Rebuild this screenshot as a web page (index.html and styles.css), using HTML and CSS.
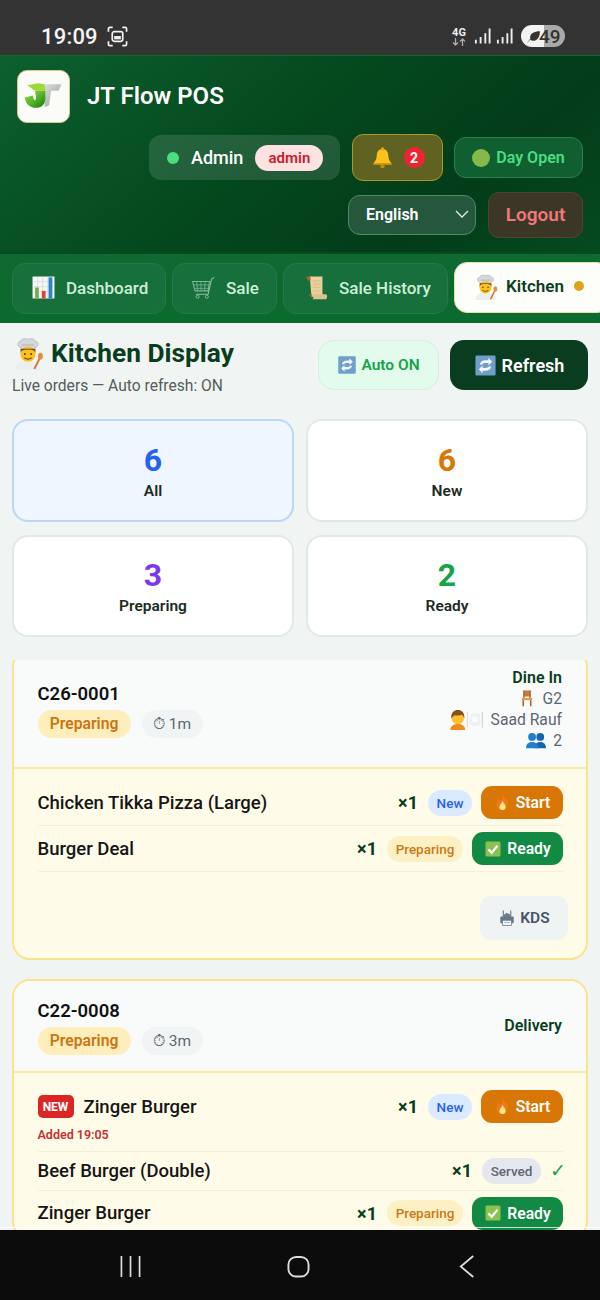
FILE: index.html
```html
<!DOCTYPE html>
<html lang="en">
<head>
<meta charset="utf-8">
<title>JT Flow POS — Kitchen Display</title>
<link rel="stylesheet" href="styles.css">
</head>
<body>
<svg class="defs" aria-hidden="true">
  <defs>
    <linearGradient id="g-logo-j" x1="0" y1="0" x2="1" y2="1"><stop offset="0" stop-color="#a8e03f"/><stop offset=".55" stop-color="#4fb026"/><stop offset="1" stop-color="#1a7516"/></linearGradient>
    <linearGradient id="g-logo-t" x1="0" y1="0" x2="1" y2="1"><stop offset="0" stop-color="#dfe2df"/><stop offset=".6" stop-color="#b4bab6"/><stop offset="1" stop-color="#7f8784"/></linearGradient>
    <symbol id="i-cook" viewBox="0 0 32 32">
      <path d="M9 10.500C5.500 10 6 5 9 5c1-2.500 4-3 7-2 3-1 6-.5 7 2 3 0 3.500 5 0 5.500l-.5 2.500h-13z" fill="#d5d8da" stroke="#a9aeb2" stroke-width=".6"/>
      <path d="M10 8.500h12" stroke="#a9aeb2" stroke-width=".7"/>
      <path d="M4 32c0-6 4-8.500 12-8.500s12 2.500 12 8.500z" fill="#eceef0"/>
      <circle cx="16" cy="17" r="7.200" fill="#fcc21b"/>
      <path d="M8.800 16c1-2.500 3-3 7.200-3s6.200.5 7.200 3l-.4-4H9.200z" fill="#7a4a2a"/>
      <path d="M12.500 20.500q3.500 2.500 7 0" fill="none" stroke="#7a4a2a" stroke-width="1.200"/>
      <circle cx="13" cy="17" r=".9" fill="#40342b"/><circle cx="19" cy="17" r=".9" fill="#40342b"/>
      <path d="M22 31l5-10" stroke="#c9762f" stroke-width="1.800"/>
      <ellipse cx="27.700" cy="19" rx="2.300" ry="3.200" fill="#e08f3e"/>
    </symbol>
    <symbol id="i-chart" viewBox="0 0 32 32">
      <rect x="3" y="3" width="26" height="26" fill="#f4f7f5"/>
      <path d="M3 9h26M3 15h26M3 21h26M9 3v26M15 3v26M21 3v26" stroke="#c8d6d4" stroke-width=".7"/>
      <rect x="6" y="16" width="4.500" height="13" fill="#7cab4f"/>
      <rect x="14" y="20" width="4.500" height="9" fill="#d8453a"/>
      <rect x="22" y="4" width="4.500" height="25" fill="#2a85cc"/>
    </symbol>
    <symbol id="i-cart" viewBox="0 0 32 32">
      <path d="M3 9h20l-1.500 11H6z" fill="none" stroke="#7fb598" stroke-width="1.200"/>
      <path d="M8 9l1 11M13 9v11M18 9l-1 11M4 13h18.500M5 17h17" stroke="#7fb598" stroke-width=".9"/>
      <path d="M29 4l-3.500 2-4 18H7" fill="none" stroke="#8fc0a6" stroke-width="1.300"/>
      <circle cx="9" cy="27" r="1.800" fill="none" stroke="#8fc0a6" stroke-width="1"/>
      <circle cx="20" cy="27" r="1.800" fill="none" stroke="#8fc0a6" stroke-width="1"/>
    </symbol>
    <symbol id="i-scroll" viewBox="0 0 32 32">
      <path d="M8 3h15v24H10z" fill="#e8cf9c"/>
      <path d="M4 3.500c2-1.500 5-1 5 2.500v2H6z" fill="#a8692f"/>
      <path d="M9 24h18c1 0 1.500 1 1.500 2.500S28 30 27 30H11c2-1 2-5-2-6z" fill="#dcc38d"/>
      <path d="M12 8h8M12 12h8M12 16h8M12 20h8" stroke="#d8bd87" stroke-width="1"/>
      <circle cx="9" cy="25" r="1.500" fill="#a3601f"/>
    </symbol>
    <symbol id="i-bell" viewBox="0 0 24 24">
      <path d="M12 3c-4 0-6 3-6 7 0 4-1.500 6-3.500 8h19c-2-2-3.500-4-3.500-8 0-4-2-7-6-7z" fill="#fcc21b"/>
      <circle cx="12" cy="3" r="1.700" fill="#e8a80f"/>
      <path d="M2.500 18h19v1.500h-19z" fill="#e8a20c"/>
      <circle cx="12" cy="21" r="2.200" fill="#c98a0a"/>
    </symbol>
    <symbol id="i-refresh" viewBox="0 0 24 24">
      <rect x="1.500" y="1.500" width="21" height="21" rx="1.500" fill="#6f9fc9"/>
      <path d="M6 11c.5-3 3-4.500 6-4.500h3V4l4 4-4 4V9.500h-3c-1.500 0-3 .5-3.500 1.500zM18 13c-.5 3-3 4.500-6 4.500H9V20l-4-4 4-4v2.500h3c1.500 0 3-.5 3.500-1.500z" fill="#f4f7fa"/>
    </symbol>
    <symbol id="i-fire" viewBox="0 0 24 24">
      <path d="M12 1c1 4 6 7 6 13a6.500 6.500 0 0 1-13 0c0-3 1.500-4.500 2.500-6.500C9 9 9.500 10 10 11c1-3 2.500-6 2-10z" fill="#f4761e"/>
      <path d="M12 10c.8 2.500 3.500 4 3.500 7a3.500 3.500 0 0 1-7 0c0-2.500 3-4 3.500-7z" fill="#fde68a"/>
    </symbol>
    <symbol id="i-check" viewBox="0 0 24 24">
      <rect x="2" y="2" width="20" height="20" rx="2" fill="#8cc152"/>
      <path d="M6 12.500l4.300 4.500L18 7.500" fill="none" stroke="#fff" stroke-width="3"/>
    </symbol>
    <symbol id="i-printer" viewBox="0 0 24 24">
      <path d="M7 2v8M17 2v8" stroke="#5f6f7b" stroke-width="1.400"/>
      <path d="M7 8l5-3 5 3v3H7z" fill="#6d7f8c"/>
      <rect x="3" y="10" width="18" height="9" rx="1.500" fill="#64798a"/>
      <rect x="6" y="15" width="12" height="7" fill="#f3f5f6" stroke="#64798a"/>
      <path d="M8 18h8" stroke="#9aa7b0"/>
    </symbol>
    <symbol id="i-chair" viewBox="0 0 24 24">
      <path d="M7 2h10v3H7zM8 5h8v2H8zM7 7h10v3H7z" fill="#c87a3c"/>
      <path d="M7 2h2v11H7zM15 2h2v11h-2z" fill="#b96a30"/>
      <rect x="5" y="12" width="14" height="3" fill="#e09a5c"/>
      <path d="M6 15h2v8H6zM16 15h2v8h-2z" fill="#a85c28"/>
    </symbol>
    <symbol id="i-waiter" viewBox="0 0 42 24">
      <path d="M2 24c0-5 4-7 8.500-7s8.500 2 8.500 7z" fill="#f08c1d"/>
      <circle cx="10.500" cy="10.500" r="7" fill="#fbc02d"/>
      <path d="M3 11c-.5-7 3-10 7.500-10s8 3 7.500 10c-1-3-2-4-3-4.500-2 1-6 1-8 .5-1.500 1-3 2-4 4z" fill="#8a4f1f"/>
      <path d="M21.500 3v18" stroke="#d9dcde" stroke-width="1.300"/>
      <rect x="24" y="5" width="12" height="14" rx="3" fill="#eef0f1"/>
      <circle cx="30" cy="12" r="3.500" fill="#fbfcfc"/>
      <path d="M38.500 3v18" stroke="#ced2d5" stroke-width="1.300"/>
    </symbol>
    <symbol id="i-people" viewBox="0 0 30 24">
      <circle cx="21" cy="7" r="5.500" fill="#1565b0"/>
      <path d="M13 23c0-6 3-9 8-9s8 3 8 9z" fill="#1565b0"/>
      <circle cx="9.500" cy="7" r="5.500" fill="#1f7fd0"/>
      <path d="M1 23c0-6 3-9 8.500-9s8.500 3 8.500 9z" fill="#1f7fd0"/>
    </symbol>
  </defs>
</svg>

<div class="phone">
  <div class="statusbar">
    <div class="status-left">
      <span class="clock">19:09</span>
      <svg class="shot" viewBox="0 0 22 22">
        <path d="M1.500 6V3q0-1.500 1.500-1.500h3M16 1.500h3q1.500 0 1.500 1.500v3M1.500 16v3q0 1.500 1.500 1.500h3M16 20.500h3q1.500 0 1.500-1.500v-3" fill="none" stroke="#f1f1f1" stroke-width="1.800"/>
        <rect x="5.500" y="6" width="11" height="10" rx="2" fill="none" stroke="#f1f1f1" stroke-width="1.800"/>
        <rect x="7.500" y="10.500" width="7" height="3.500" fill="#f1f1f1"/>
      </svg>
    </div>
    <div class="status-right">
      <span class="net"><b>4G</b>
        <svg class="net-arrows" viewBox="0 0 14 8"><path d="M3.500 0v7M1 4.500L3.500 7 6 4.500M10.500 8V1M8 3.500L10.500 1 13 3.500" fill="none" stroke="#aaa" stroke-width="1.300"/></svg>
      </span>
      <svg class="signal" viewBox="0 0 18 18"><path d="M1 13h2v4H1zM6 10h2v7H6zM11 6h2v11h-2zM15.500 1h2v16h-2z" fill="#eee"/></svg>
      <svg class="signal" viewBox="0 0 18 18"><path d="M1 13h2v4H1zM6 10h2v7H6zM11 6h2v11h-2zM15.500 1h2v16h-2z" fill="#eee"/></svg>
      <span class="battery">
        <svg class="leaf" viewBox="0 0 14 14"><path d="M1 13L4 9C3 4 8 2 13 2c0 5-2 9-7 9L4 10z" fill="#333"/></svg>
        <span class="batt-num">49</span>
      </span>
    </div>
  </div>

  <header class="topbar">
    <div class="brand">
      <div class="logo">
        <svg viewBox="0 0 54 54" class="logo-art">
          <path d="M27 14h19l-3 7h-8l-2 15q-3 2.500-5 1.500l1-16.500h-4z" fill="url(#g-logo-t)"/>
          <path d="M18 21h11v8c0 6-4 10-10 10-6 0-11-4-12-11l9-2c0 3 1 5 2 5s1-2 1-4z" fill="url(#g-logo-j)"/>
          <path d="M10 15l12-2 6 1 1 7H18z" fill="#9bd83a"/>
        </svg>
      </div>
      <h1 class="app-name">JT Flow POS</h1>
    </div>
    <div class="tools">
      <div class="user-pill"><span class="dot"></span><span class="user-name">Admin</span><span class="role">admin</span></div>
      <button class="bell-btn"><svg class="ic ic-22"><use href="#i-bell"/></svg><span class="count">2</span></button>
      <button class="day-btn"><span class="day-dot"></span>Day Open</button>
    </div>
    <div class="tools tools-2">
      <div class="lang">English
        <svg class="chev" viewBox="0 0 14 8"><path d="M1 1l6 6 6-6" fill="none" stroke="#e6efe9" stroke-width="1.300"/></svg>
      </div>
      <button class="logout">Logout</button>
    </div>
  </header>

  <nav class="tabs">
    <a class="tab tab-dash"><svg class="ic ic-26"><use href="#i-chart"/></svg>Dashboard</a>
    <a class="tab tab-sale"><svg class="ic ic-26"><use href="#i-cart"/></svg>Sale</a>
    <a class="tab tab-hist"><svg class="ic ic-26"><use href="#i-scroll"/></svg>Sale History</a>
    <a class="tab tab-active"><svg class="ic ic-26"><use href="#i-cook"/></svg>Kitchen<span class="tab-dot"></span></a>
  </nav>

  <main class="content">
    <section class="page-head">
      <div class="page-title">
        <h2><svg class="ic ic-34"><use href="#i-cook"/></svg>Kitchen Display</h2>
        <p>Live orders — Auto refresh: ON</p>
      </div>
      <div class="page-actions">
        <button class="auto-btn"><svg class="ic ic-19"><use href="#i-refresh"/></svg>Auto ON</button>
        <button class="refresh-btn"><svg class="ic ic-23"><use href="#i-refresh"/></svg>Refresh</button>
      </div>
    </section>

    <section class="stats">
      <div class="stat stat-on"><strong class="c-blue">6</strong><span>All</span></div>
      <div class="stat"><strong class="c-amber">6</strong><span>New</span></div>
      <div class="stat"><strong class="c-purple">3</strong><span>Preparing</span></div>
      <div class="stat"><strong class="c-green">2</strong><span>Ready</span></div>
    </section>

    <section class="orders">
      <div class="orders-inner">
        <article class="order">
          <div class="order-head">
            <div class="order-id">
              <div class="num">C26-0001</div>
              <div class="badges"><span class="badge-prep">Preparing</span><span class="timer">⏱ 1m</span></div>
            </div>
            <div class="order-meta">
              <div class="type">Dine In</div>
              <div class="meta"><svg class="ic ic-17"><use href="#i-chair"/></svg>G2</div>
              <div class="meta"><svg class="ic-waiter"><use href="#i-waiter"/></svg>Saad Rauf</div>
              <div class="meta"><svg class="ic-people"><use href="#i-people"/></svg>2</div>
            </div>
          </div>
          <div class="order-items">
            <div class="item">
              <span class="item-name">Chicken Tikka Pizza (Large)</span>
              <span class="qty">×1</span><span class="st st-new">New</span>
              <button class="act act-start"><svg class="ic ic-fire"><use href="#i-fire"/></svg>Start</button>
            </div>
            <div class="item">
              <span class="item-name">Burger Deal</span>
              <span class="qty">×1</span><span class="st st-prep">Preparing</span>
              <button class="act act-ready"><svg class="ic ic-17"><use href="#i-check"/></svg>Ready</button>
            </div>
            <div class="order-foot">
              <button class="kds"><svg class="ic ic-17"><use href="#i-printer"/></svg>KDS</button>
            </div>
          </div>
        </article>

        <article class="order">
          <div class="order-head">
            <div class="order-id">
              <div class="num">C22-0008</div>
              <div class="badges"><span class="badge-prep">Preparing</span><span class="timer">⏱ 3m</span></div>
            </div>
            <div class="order-meta">
              <div class="type">Delivery</div>
            </div>
          </div>
          <div class="order-items">
            <div class="item item-added">
              <div class="item-line">
                <span class="item-name"><span class="new-tag">NEW</span>Zinger Burger</span>
                <span class="qty">×1</span><span class="st st-new">New</span>
                <button class="act act-start"><svg class="ic ic-fire"><use href="#i-fire"/></svg>Start</button>
              </div>
              <div class="added">Added 19:05</div>
            </div>
            <div class="item">
              <span class="item-name">Beef Burger (Double)</span>
              <span class="qty">×1</span><span class="st st-served">Served</span>
              <span class="tick">✓</span>
            </div>
            <div class="item">
              <span class="item-name">Zinger Burger</span>
              <span class="qty">×1</span><span class="st st-prep">Preparing</span>
              <button class="act act-ready"><svg class="ic ic-17"><use href="#i-check"/></svg>Ready</button>
            </div>
          </div>
        </article>
      </div>
    </section>
  </main>

  <div class="navbar">
    <svg class="nav-ic" viewBox="0 0 22 24"><path d="M1.500 1v22M11 1v22M20.500 1v22" stroke="#dcdcdc" stroke-width="1.800" fill="none"/></svg>
    <svg class="nav-ic" viewBox="0 0 24 24"><rect x="1.500" y="2" width="21" height="20.500" rx="8" fill="none" stroke="#dcdcdc" stroke-width="2"/></svg>
    <svg class="nav-ic" viewBox="0 0 16 24"><path d="M14.500 1L1.500 12l13 11" fill="none" stroke="#dcdcdc" stroke-width="1.900"/></svg>
  </div>
</div>
</body>
</html>
```
FILE: styles.css
```css
* { box-sizing: border-box; }
html, body { margin: 0; padding: 0; }
body { font-family: Roboto, "Liberation Sans", sans-serif; background: #0c0c0c; }
button { font-family: inherit; border: 0; cursor: pointer; padding: 0; }
h1, h2, p { margin: 0; }
.defs { width: 0; height: 0; display: block; overflow: hidden; }

.phone { width: 600px; height: 1300px; display: flex; flex-direction: column; overflow: hidden; }
.ic { display: block; flex: none; }
.ic-fire { width: 21px; height: 21px; margin: 0 -2px; }
.ic-17 { width: 18px; height: 18px; }
.ic-19 { width: 20px; height: 20px; }
.ic-22 { width: 23px; height: 23px; }
.ic-23 { width: 23px; height: 23px; }
.ic-26 { width: 27px; height: 27px; }
.ic-34 { width: 34px; height: 34px; margin-left: -1px; }

/* status bar */
.statusbar { flex: none; height: 55px; background: #333333; display: flex; justify-content: space-between; align-items: center; padding: 17px 35px 0 41px; }
.status-left { display: flex; align-items: center; gap: 9px; }
.clock { font-size: 22px; font-weight: 500; color: #f5f5f5; letter-spacing: .2px; }
.shot { width: 21px; height: 21px; }
.status-right { display: flex; align-items: center; gap: 5px; }
.net { display: flex; flex-direction: column; align-items: center; color: #eee; margin-right: 3px; }
.net b { font-size: 11px; font-weight: 700; line-height: 11px; }
.net-arrows { width: 14px; height: 8px; }
.signal { width: 17px; height: 18px; }
.battery { width: 44px; height: 22px; border-radius: 11px; margin-left: 3px; background: linear-gradient(90deg, #f3f3f3 0 52%, #a9a9a9 52% 100%); display: flex; align-items: center; padding-left: 5px; }
.leaf { width: 15px; height: 15px; }
.batt-num { font-size: 19px; font-weight: 500; color: #333; margin-left: -2px; }

/* header */
.topbar { flex: none; height: 197px; padding: 15px 17px 0 17px; background: linear-gradient(140deg, #0c6030 0%, #04481e 45%, #033c19 75%, #054a20 100%); border-top: 1px solid #0a6a33; }
.brand { display: flex; align-items: center; gap: 17px; height: 53px; margin-top: -1px; padding-bottom: 1px; }
.logo { width: 53px; height: 53px; border-radius: 10px; background: #fbfcf7; border: 1.500px solid #d8c98a; flex: none; overflow: hidden; }
.logo-art { width: 100%; height: 100%; display: block; }
.app-name { font-size: 24px; font-weight: 600; color: #fff; }
.tools { display: flex; justify-content: flex-end; align-items: center; gap: 12px; margin-top: 11px; }
.tools-2 { margin-top: 11px; }
.user-pill { width: 191px; height: 45px; border-radius: 12px; background: rgba(255,255,255,.12); display: flex; align-items: center; padding-left: 18px; }
.dot { width: 12px; height: 12px; border-radius: 50%; background: #4ade80; }
.user-name { font-size: 18px; font-weight: 500; color: #fff; margin-left: 12px; }
.role { margin-left: 12px; width: 68px; height: 26px; border-radius: 13px; background: #fde2e2; color: #c81e2b; font-size: 15px; font-weight: 600; display: flex; align-items: center; justify-content: center; }
.bell-btn { width: 91px; height: 47px; margin-right: -1px; border-radius: 11px; background: #5f6220; border: 1.500px solid #a79a2c; display: flex; align-items: center; justify-content: center; gap: 10px; }
.count { width: 21px; height: 21px; border-radius: 50%; background: #ed2336; color: #fff; font-size: 14px; font-weight: 700; display: flex; align-items: center; justify-content: center; }
.day-btn { width: 129px; height: 41px; border-radius: 12px; background: #0f5f30; border: 1.500px solid #2a7f50; color: #4ade80; font-size: 16px; font-weight: 600; display: flex; align-items: center; justify-content: center; gap: 6px; }
.day-dot { width: 18px; height: 18px; border-radius: 50%; background: #86b84a; }
.lang { width: 128px; height: 40px; border-radius: 12px; background: #24573c; border: 1.500px solid #4d8a69; color: #fff; font-size: 16px; font-weight: 600; display: flex; align-items: center; justify-content: space-between; padding: 0 6px 2px 17px; }
.chev { width: 14px; height: 8px; }
.logout { width: 95px; height: 46px; border-radius: 11px; background: #3b3726; border: 1.500px solid #54432c; color: #f07878; font-size: 19px; font-weight: 600; padding-bottom: 2px; }

/* tabs */
.tabs { flex: none; height: 71px; background: linear-gradient(180deg, #0e6a30, #0b6a2e); border-top: 2px solid #064a20; padding: 9px 0 0 12px; display: flex; align-items: flex-start; gap: 6px; overflow: hidden; }
.tab { flex: none; height: 51px; border-radius: 13px; background: #17703c; border: 1px solid #25794a; display: flex; align-items: center; gap: 9px; padding: 0 0 2px 17px; color: #cdeed8; font-size: 17px; font-weight: 500; white-space: nowrap; }
.tab-dash { width: 154px; }
.tab-sale { width: 105px; padding-left: 17px; }
.tab-hist { width: 165px; padding-left: 19px; }
.tab-active { width: 156px; margin-top: -1px; background: #fdfdfa; border: 1px solid #e9dca8; color: #0c3c1e; font-weight: 600; padding: 0 0 3px 17px; gap: 7px; }
.tab-dot { width: 10px; height: 10px; border-radius: 50%; background: #e0a218; margin-left: 3px; }

/* content */
.content { flex: 1; min-height: 0; background: #f0f4f2; padding: 0 12px; display: flex; flex-direction: column; }
.page-head { flex: none; display: flex; justify-content: space-between; height: 96px; }
.page-title { padding-top: 14px; }
.page-title h2 { font-size: 26.300px; font-weight: 700; color: #0a3d20; display: flex; align-items: center; gap: 6px; height: 32px; }
.page-title p { font-size: 15.600px; color: #555d5a; margin-top: 7px; line-height: 20px; }
.page-actions { display: flex; gap: 11px; padding-top: 17px; }
.auto-btn { width: 121px; height: 50px; border-radius: 16px; background: #e3fbec; border: 1.500px solid #cdf3db; color: #16a34a; font-size: 15.500px; font-weight: 600; display: flex; align-items: center; justify-content: center; gap: 4px; }
.refresh-btn { width: 138px; height: 50px; border-radius: 14px; background: #0a3d20; color: #fff; font-size: 18px; font-weight: 600; display: flex; align-items: center; justify-content: center; gap: 5px; }

.stats { flex: none; display: grid; grid-template-columns: 1fr 1fr; gap: 13px 12px; }
.stat { height: 102.500px; border-radius: 16px; background: #fff; border: 2px solid #e2e8e5; display: flex; flex-direction: column; align-items: center; justify-content: center; gap: 4px; padding-top: 1px; }
.stat-on { background: #eff6ff; border-color: #b9d8f8; }
.stat strong { font-size: 32px; font-weight: 700; line-height: 36px; }
.stat span { font-size: 15.500px; font-weight: 600; color: #1c2b22; line-height: 18px; }
.c-blue { color: #2563eb; }
.c-amber { color: #d97706; }
.c-purple { color: #7c3aed; }
.c-green { color: #16a34a; }

/* orders */
.orders { flex: 1; min-height: 0; overflow: hidden; margin-top: 23px; }
.orders-inner { margin-top: -11.500px; display: flex; flex-direction: column; gap: 19px; }
.order { flex: none; border: 2.500px solid #fbe28f; border-radius: 18px; overflow: hidden; background: #fefbe8; }
.order-head { background: #f9fbfb; padding: 16px 24px 16px 23.500px; border-bottom: 2px solid #fbe9a8; display: flex; justify-content: space-between; align-items: center; }
.num { font-size: 18.500px; font-weight: 600; color: #111; line-height: 24px; margin: 2px 0 4px; }
.badges { display: flex; gap: 11px; }
.badge-prep { width: 93px; height: 28px; border-radius: 14px; background: #fdeebb; color: #cb7613; font-size: 15.700px; font-weight: 600; display: flex; align-items: center; justify-content: center; }
.timer { width: 61px; height: 28px; border-radius: 14px; background: #f1f4f4; color: #5d6670; font-size: 15.500px; display: flex; align-items: center; justify-content: center; }
.order-meta { display: flex; flex-direction: column; align-items: flex-end; }
.type { font-size: 16px; font-weight: 600; color: #0a3d20; line-height: 21px; }
.meta { font-size: 15.700px; color: #5d6670; line-height: 21px; height: 21px; display: flex; align-items: center; gap: 6px; }
.ic-waiter { width: 38px; height: 21px; margin-right: -1px; }
.ic-people { width: 22px; height: 17px; }

.order-items { padding: 11.500px 23px 0 23.500px; }
.item { display: flex; align-items: center; padding: 6px 0; border-bottom: 1px solid #f5f0dc; }
.item-added { display: block; padding-bottom: 7.500px; }
.item-line { display: flex; align-items: center; }
.item-name { margin-right: auto; font-size: 18.500px; font-weight: 500; color: #161616; display: flex; align-items: center; gap: 10px; }
.qty { font-size: 18px; font-weight: 700; color: #0a3d20; margin-right: 10px; }
.st { height: 26px; border-radius: 13px; font-size: 13.500px; font-weight: 500; display: flex; align-items: center; justify-content: center; margin-right: 9px; }
.st-new { width: 44px; background: #dbeafe; color: #2563eb; }
.st-prep { width: 76px; background: #fdf0c4; color: #c97a18; }
.st-served { width: 59px; background: #e4e7ee; color: #5f6677; margin-right: 9px; }
.act { height: 33px; border-radius: 11px; color: #fff; font-size: 15.700px; font-weight: 600; display: flex; align-items: center; justify-content: center; gap: 5px; }
.act-start { width: 82px; background: #d97706; }
.act-ready { width: 91px; background: #128a43; }
.tick { font-size: 19px; color: #16a34a; line-height: 26px; width: 13px; }
.new-tag { background: #dc2626; color: #fff; font-size: 12px; font-weight: 700; width: 36px; height: 23px; border-radius: 5px; display: flex; align-items: center; justify-content: center; }
.added { font-size: 12.500px; font-weight: 600; color: #c53030; margin-top: 4px; line-height: 16px; }
.order-foot { display: flex; justify-content: flex-end; margin-right: -5px; padding: 24px 0 17.500px; }
.kds { width: 88px; height: 44px; border-radius: 11px; background: #f0f3f4; color: #475569; font-size: 15.500px; font-weight: 600; display: flex; align-items: center; justify-content: center; gap: 4px; }

/* android nav */
.navbar { position: relative; flex: none; height: 70px; background: #0c0c0c; display: grid; grid-template-columns: 120px 21px 146px 23px 149px 16px; padding-top: 25px; }
.navbar::before { content: ""; position: absolute; left: 0; right: 0; top: -3px; height: 1px; background: rgba(255,255,255,.75); }
.nav-ic { width: 100%; height: 23px; display: block; }
.navbar .nav-ic:nth-child(1) { grid-column: 2; }
.navbar .nav-ic:nth-child(2) { grid-column: 4; }
.navbar .nav-ic:nth-child(3) { grid-column: 6; }
```
